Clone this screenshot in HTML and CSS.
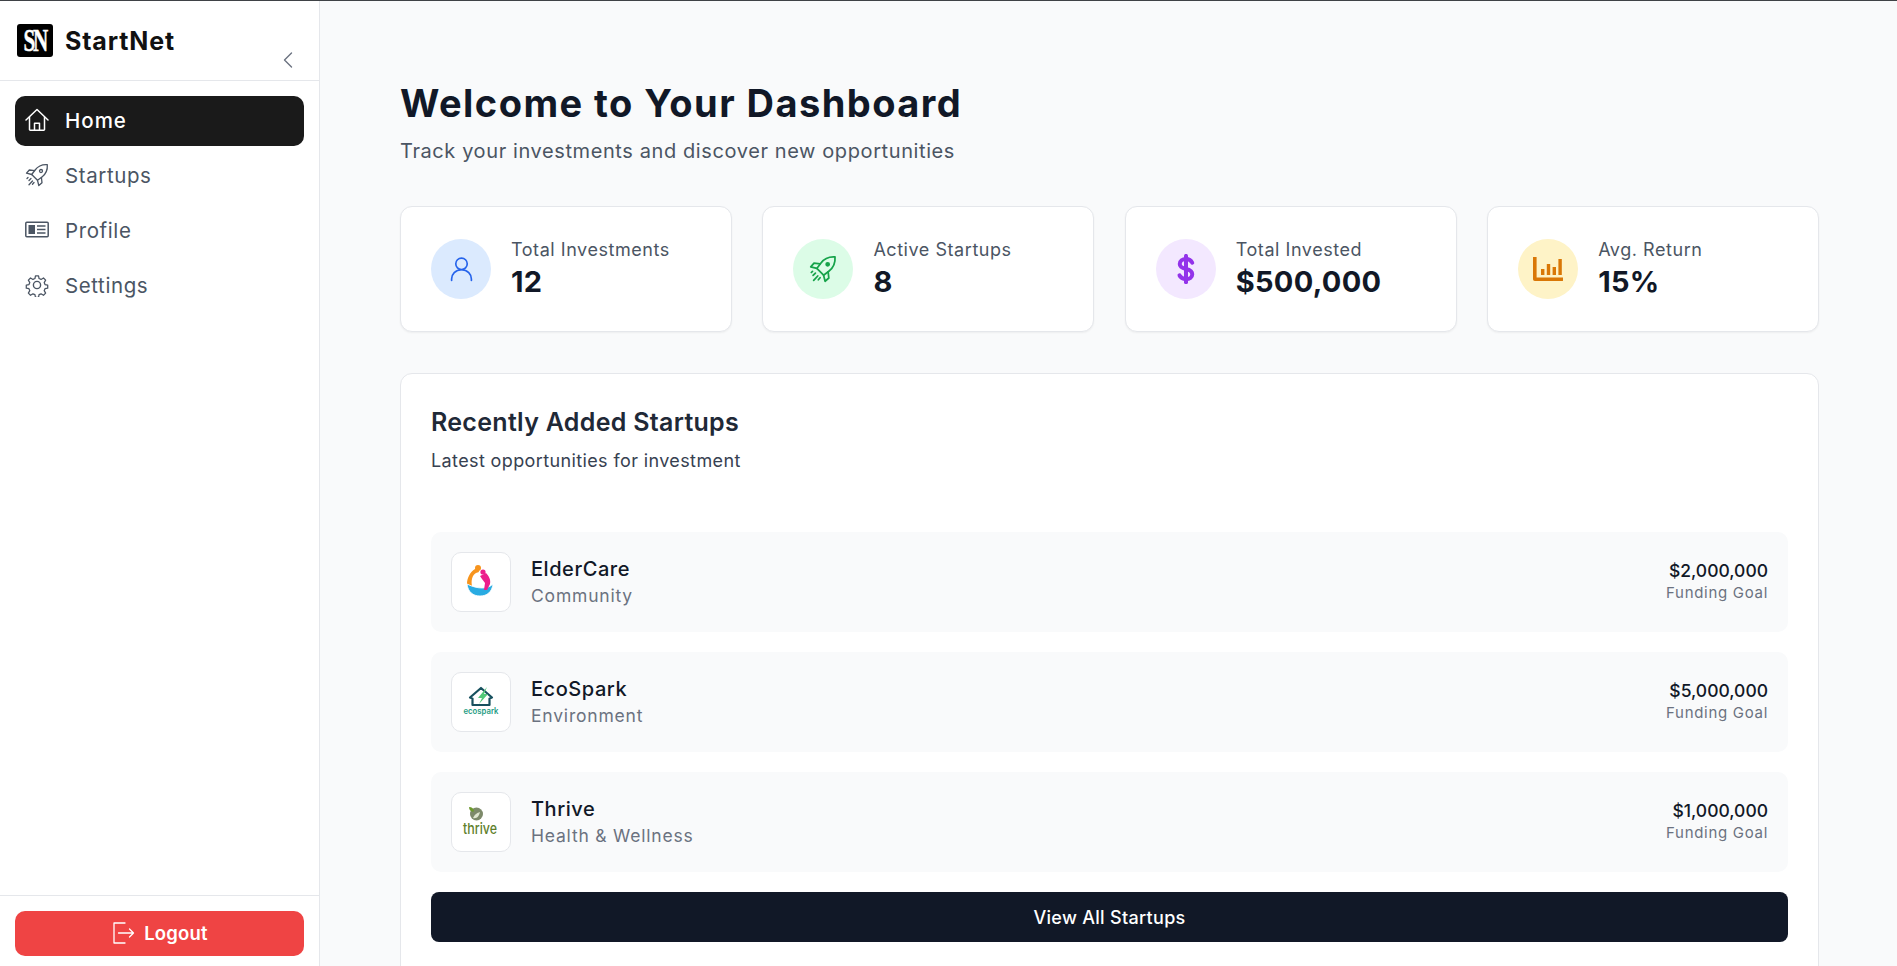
FILE: index.html
```html
<!DOCTYPE html>
<html lang="en">
<head>
<meta charset="utf-8">
<title>StartNet Dashboard</title>
<link rel="stylesheet" href="styles.css">
</head>
<body>
<div class="topline"></div>
<div class="app">
  <aside class="sidebar">
    <div class="brand">
      <div class="brand-row">
        <span class="brand-logo"><span class="brand-mark">SN</span></span>
        <span class="brand-name">StartNet</span>
      </div>
      <svg class="collapse" viewBox="0 0 24 24" fill="none" stroke="#6b7280" stroke-width="1.4" stroke-linecap="round" stroke-linejoin="round"><path d="M15.5 5 8.5 12l7 7"/></svg>
    </div>
    <nav class="nav">
      <a class="nav-item active">
        <svg class="nav-icon" viewBox="0 0 24 24" fill="none" stroke="currentColor" stroke-width="1.5" stroke-linecap="round" stroke-linejoin="round"><path d="M1 12 12 1.500 23 12"/><path d="M4.500 9V21.500a.8.8 0 0 0 .8.8h13.400a.8.8 0 0 0 .8-.8V9"/><path d="M9.500 22.200v-7h5v7"/></svg>
        <span>Home</span>
      </a>
      <a class="nav-item">
        <svg class="nav-icon" viewBox="0 0 24 24" fill="none" stroke="currentColor" stroke-width="1.3" stroke-linecap="round" stroke-linejoin="round"><path d="M22.300 1.700c-5-.4-9.300 1.500-12.200 5.300l-3.400 4.500 5.800 5.800 4.500-3.400c3.800-2.900 5.700-7.200 5.300-12.200Z"/><path d="M9.600 7.600 4.300 7 1.500 10.200l5.200 1.300"/><path d="m16.400 14.400.6 5.300-3.200 2.800-1.300-5.200"/><circle cx="16" cy="8" r="1.500"/><path d="m6 15.500-2 2M7.500 18l-3.500 3.800M9 19.500l-1.500 1.700M2 15.500l1-1"/></svg>
        <span>Startups</span>
      </a>
      <a class="nav-item">
        <svg class="nav-icon" viewBox="0 0 24 24" fill="none" stroke="currentColor" stroke-width="1.500"><rect x="0.800" y="4.200" width="22.400" height="14.600" rx="1"/><rect x="3.500" y="7" width="6.500" height="9" fill="currentColor" stroke="none"/><path d="M12 8h8.500M12 11.500h8.500M12 15h8.500"/></svg>
        <span>Profile</span>
      </a>
      <a class="nav-item">
        <svg class="nav-icon" viewBox="0 0 24 24" fill="none" stroke="currentColor" stroke-width="1.400" stroke-linecap="round" stroke-linejoin="round"><path d="M10.300 1.800h3.400l.6 3 2.200 1 2.700-1.600 2.400 2.400-1.600 2.700.9 2.200 3 .6v3.400l-3 .6-.9 2.200 1.600 2.700-2.400 2.400-2.700-1.600-2.200.9-.6 3h-3.400l-.6-3-2.200-.9-2.700 1.600-2.400-2.400 1.600-2.700-.9-2.200-3-.6v-3.400l3-.6.9-2.200-1.600-2.700 2.400-2.400 2.700 1.600 2.200-1z" transform="translate(1.200 1.200) scale(.9)"/><circle cx="12" cy="12" r="3.600"/></svg>
        <span>Settings</span>
      </a>
    </nav>
    <div class="logout-wrap">
      <button class="logout">
        <svg class="logout-icon" viewBox="0 0 24 24" fill="none" stroke="currentColor" stroke-width="1.300" stroke-linecap="round" stroke-linejoin="round"><path d="M14 2H3v20h11"/><path d="M7.500 12H22.500M18.500 8l4 4-4 4"/></svg>
        <span>Logout</span>
      </button>
    </div>
  </aside>

  <main class="main">
    <h1 class="title">Welcome to Your Dashboard</h1>
    <p class="subtitle">Track your investments and discover new opportunities</p>

    <section class="stats">
      <div class="stat">
        <span class="stat-icon blue">
          <svg class="icon-person" viewBox="0 0 24 24" fill="none" stroke="currentColor" stroke-width="1.600" stroke-linecap="round" stroke-linejoin="round"><circle cx="12" cy="7" r="5.500"/><path d="M2.500 23v-1.500c0-4.400 3.600-8.800 9.500-8.800s9.500 4.400 9.500 8.800V23"/></svg>
        </span>
        <div class="stat-text"><div class="stat-label">Total Investments</div><div class="stat-value">12</div></div>
      </div>
      <div class="stat">
        <span class="stat-icon green">
          <svg class="icon-rocket" viewBox="0 0 24 24" fill="none" stroke="currentColor" stroke-width="1.500" stroke-linecap="round" stroke-linejoin="round"><path d="M22.300 1.700c-5-.4-9.300 1.500-12.200 5.300l-3.400 4.500 5.800 5.800 4.500-3.400c3.800-2.900 5.700-7.200 5.300-12.200Z"/><path d="M9.600 7.600 4.300 7 1.500 10.200l5.200 1.300"/><path d="m16.400 14.400.6 5.300-3.200 2.800-1.300-5.200"/><circle cx="16" cy="8" r="1.300" fill="currentColor"/><path d="m5.500 15.500-2 2M7.500 18l-3.500 3.800M9.500 19.500l-1.500 1.700M2 15l1-1"/></svg>
        </span>
        <div class="stat-text"><div class="stat-label">Active Startups</div><div class="stat-value">8</div></div>
      </div>
      <div class="stat">
        <span class="stat-icon purple">
          <svg viewBox="0 0 24 24" fill="none" stroke="currentColor" stroke-width="3.200" stroke-linecap="round" stroke-linejoin="round"><path d="M12 1.500v21"/><path d="M17 7c-.8-1.700-2.500-3-5-3-2.800 0-5 1.500-5 4 0 2.500 2.300 3.400 5 4s5 1.600 5 4.100c0 2.600-2.200 3.900-5 3.900-2.600 0-4.400-1.100-5.200-2.900"/></svg>
        </span>
        <div class="stat-text"><div class="stat-label">Total Invested</div><div class="stat-value">$500,000</div></div>
      </div>
      <div class="stat">
        <span class="stat-icon amber">
          <svg viewBox="0 0 30 30" fill="currentColor"><path d="M0 3h3.600v20.400h25.400a1.800 1.800 0 0 1 0 3.600H1.800A1.800 1.800 0 0 1 0 25.200z"/><rect x="8" y="15" width="3.400" height="6"/><rect x="13.800" y="10" width="3.400" height="11"/><rect x="19.600" y="13" width="3.400" height="8"/><rect x="25.400" y="5" width="3.400" height="16"/></svg>
        </span>
        <div class="stat-text"><div class="stat-label">Avg. Return</div><div class="stat-value">15%</div></div>
      </div>
    </section>

    <section class="panel">
      <h2 class="panel-title">Recently Added Startups</h2>
      <p class="panel-sub">Latest opportunities for investment</p>
      <div class="rows">
        <div class="row">
          <span class="logo">
            <svg class="logo-art" viewBox="0 0 54 54">
              <path d="M21 14c-5 3-8 9-8 15l5 2c-1-5 0-11 4-13l3-1-1-4z" fill="#f7941d"/>
              <circle cx="24" cy="13" r="3" fill="#f7941d"/>
              <path d="M13 29c6 3 11 4 15 4 4 0 8-1 11-4-1 8-6 12-13 12-7 0-12-4-13-12Z" fill="#29abe2" stroke="#fff" stroke-width=".8"/>
              <path d="M26 21l6-3c3 3 5 7 4 11l-3 6h-3l1-7-3-4z" fill="#ec1e8c"/>
              <circle cx="29" cy="17" r="2.600" fill="#ec1e8c"/>
            </svg>
          </span>
          <div class="row-main"><div class="row-name">ElderCare</div><div class="row-cat">Community</div></div>
          <div class="row-fund"><div class="row-amount">$2,000,000</div><div class="row-goal">Funding Goal</div></div>
        </div>
        <div class="row">
          <span class="logo">
            <svg class="logo-art" viewBox="0 0 54 54">
              <path d="M27 13 16 22.500l2.500 1V30h17v-6.500l2.500-1z" fill="none" stroke="#17505e" stroke-width="2.200" stroke-linejoin="round"/>
              <path d="M33 12 24 23h4l-3 6 9-10h-4z" fill="#52c878"/>
              <text class="eco-word" x="9.500" y="39" textLength="35" lengthAdjust="spacingAndGlyphs">ecospark</text>
            </svg>
          </span>
          <div class="row-main"><div class="row-name">EcoSpark</div><div class="row-cat">Environment</div></div>
          <div class="row-fund"><div class="row-amount">$5,000,000</div><div class="row-goal">Funding Goal</div></div>
        </div>
        <div class="row">
          <span class="logo">
            <svg class="logo-art" viewBox="0 0 54 54">
              <circle cx="22.500" cy="19" r="6.500" fill="#7d8a6a"/>
              <path d="M15 12c3 0 5 1.500 5 4.500-2.500.7-5-1-5-4.500z" fill="#6d9a2e"/>
              <path d="M19 23c2-4 4-5 7-6-1 4-3 7-7 6z" fill="#dfe6cf"/>
              <text class="thrive-word" x="9" y="38.500" textLength="34" lengthAdjust="spacingAndGlyphs">thrive</text>
            </svg>
          </span>
          <div class="row-main"><div class="row-name">Thrive</div><div class="row-cat">Health &amp; Wellness</div></div>
          <div class="row-fund"><div class="row-amount">$1,000,000</div><div class="row-goal">Funding Goal</div></div>
        </div>
      </div>
      <button class="view-all">View All Startups</button>
    </section>
  </main>
</div>
</body>
</html>
```

FILE: styles.css
```css
* { box-sizing: border-box; }
html, body { margin: 0; height: 100%; overflow: hidden; }
body {
  font-family: Inter, "Open Sans", "Liberation Sans", sans-serif;
  background: #f9fafb;
  color: #111827;
  display: flex;
  flex-direction: column;
}
.topline { height: 1px; background: #3f4246; flex: none; }
.app { flex: 1; display: flex; min-height: 0; }

.sidebar {
  width: 320px;
  flex: none;
  background: #fff;
  border-right: 1px solid #e5e7eb;
  display: flex;
  flex-direction: column;
}
.brand {
  height: 80px;
  border-bottom: 1px solid #e5e7eb;
  padding: 23px 0 0 17px;
  position: relative;
}
.brand-row { display: flex; align-items: center; gap: 12px; }
.brand-logo {
  width: 36px;
  height: 33px;
  background: #000;
  border-radius: 3px;
  display: flex;
  align-items: center;
  justify-content: center;
}
.brand-mark {
  color: #fff;
  font-family: "Liberation Serif", serif;
  font-weight: 700;
  font-size: 31px;
  line-height: 1;
  letter-spacing: -3px;
  transform: scaleX(.68);
  -webkit-text-stroke: .5px #fff;
}
.brand-name { font-size: 25px; font-weight: 700; color: #111; letter-spacing: .85px; }
.collapse { position: absolute; left: 276px; top: 47px; width: 24px; height: 24px; }

.nav { flex: 1; padding: 15px 15px 0; display: flex; flex-direction: column; gap: 5px; }
.nav-item {
  height: 50px;
  border-radius: 10px;
  display: flex;
  align-items: center;
  gap: 16px;
  padding: 0 0 2px 10px;
  color: #4b5563;
  font-size: 20.500px;
  letter-spacing: .6px;
}
.nav-item.active { background: #1a1a1a; color: #fff; font-weight: 500; letter-spacing: 1px; }
.nav-icon { width: 24px; height: 24px; flex: none; }

.logout-wrap { height: 71px; border-top: 1px solid #e5e7eb; padding: 15px 15px 0; }
.logout {
  width: 100%;
  height: 45px;
  border: 0;
  border-radius: 10px;
  background: #ef4444;
  color: #fff;
  font: 600 18.500px Inter, "Liberation Sans", sans-serif;
  letter-spacing: .2px;
  display: flex;
  align-items: center;
  justify-content: center;
  gap: 9px;
  padding: 0 0 2px;
}
.logout-icon { width: 24px; height: 24px; }

.main { flex: 1; min-width: 0; padding: 76px 78px 0 80px; }
.title { margin: 0; font-size: 38px; line-height: 52px; font-weight: 700; color: #111827; letter-spacing: 1.450px; }
.subtitle { margin: 7px 0 0; font-size: 20px; line-height: 30px; color: #4b5563; letter-spacing: .6px; }

.stats { margin-top: 40px; display: grid; grid-template-columns: repeat(4, 1fr); gap: 30.500px; }
.stat {
  height: 126px;
  background: #fff;
  border: 1px solid #e5e7eb;
  border-radius: 12px;
  box-shadow: 0 1px 2px rgba(0,0,0,.05);
  display: flex;
  align-items: center;
  gap: 20px;
  padding: 0 0 0 30px;
}
.stat-icon {
  width: 60px;
  height: 60px;
  border-radius: 50%;
  display: flex;
  align-items: center;
  justify-content: center;
  flex: none;
}
.stat-icon svg { width: 30px; height: 30px; }
.stat-icon .icon-person { width: 25px; height: 26px; }
.stat-icon .icon-rocket { width: 28px; height: 28px; }
.blue { background: #dbeafe; color: #2563eb; }
.green { background: #dcfce7; color: #16a34a; }
.purple { background: #f3e8ff; color: #9333ea; }
.amber { background: #fef3c7; color: #d97706; }
.stat-label { font-size: 18px; line-height: 24px; color: #4b5563; letter-spacing: .55px; }
.stat-value { font-size: 29px; line-height: 36px; font-weight: 700; color: #111827; margin-top: 2px; letter-spacing: .3px; }

.panel {
  margin-top: 41px;
  height: 640px;
  background: #fff;
  border: 1px solid #e5e7eb;
  border-radius: 12px;
  padding: 30px 30px 0;
}
.panel-title { margin: 0; font-size: 25px; line-height: 36px; font-weight: 600; color: #1f2937; letter-spacing: .3px; }
.panel-sub { margin: 8px 0 0; font-size: 18px; line-height: 26px; color: #374151; letter-spacing: .38px; }
.rows { margin-top: 58px; display: flex; flex-direction: column; gap: 20px; }
.row {
  height: 100px;
  background: #f9fafb;
  border-radius: 10px;
  display: flex;
  align-items: center;
  padding: 0 20px;
}
.logo {
  width: 60px;
  height: 60px;
  background: #fff;
  border: 1px solid #e5e7eb;
  border-radius: 10px;
  display: flex;
  align-items: center;
  justify-content: center;
  flex: none;
}
.logo-art { width: 54px; height: 54px; }
.eco-word { font-size: 8.500px; font-weight: 600; fill: #1f9d84; }
.thrive-word { font-size: 15px; font-weight: 500; fill: #5f7f2c; }
.row-main { flex: 1; margin: -1px 0 0 20px; }
.row-name { font-size: 20px; line-height: 28px; font-weight: 500; color: #111827; letter-spacing: .55px; }
.row-cat { font-size: 17.500px; line-height: 26px; color: #6b7280; letter-spacing: .8px; }
.row-fund { text-align: right; margin-top: -2px; }
.row-amount { font-size: 17.500px; line-height: 24px; font-weight: 500; color: #111827; }
.row-goal { font-size: 15px; line-height: 20px; color: #6b7280; letter-spacing: .7px; }

.view-all {
  width: 100%;
  height: 50px;
  margin-top: 20px;
  border: 0;
  border-radius: 8px;
  background: #111827;
  color: #fff;
  font: 500 18px Inter, "Liberation Sans", sans-serif;
  letter-spacing: .3px;
}
```
